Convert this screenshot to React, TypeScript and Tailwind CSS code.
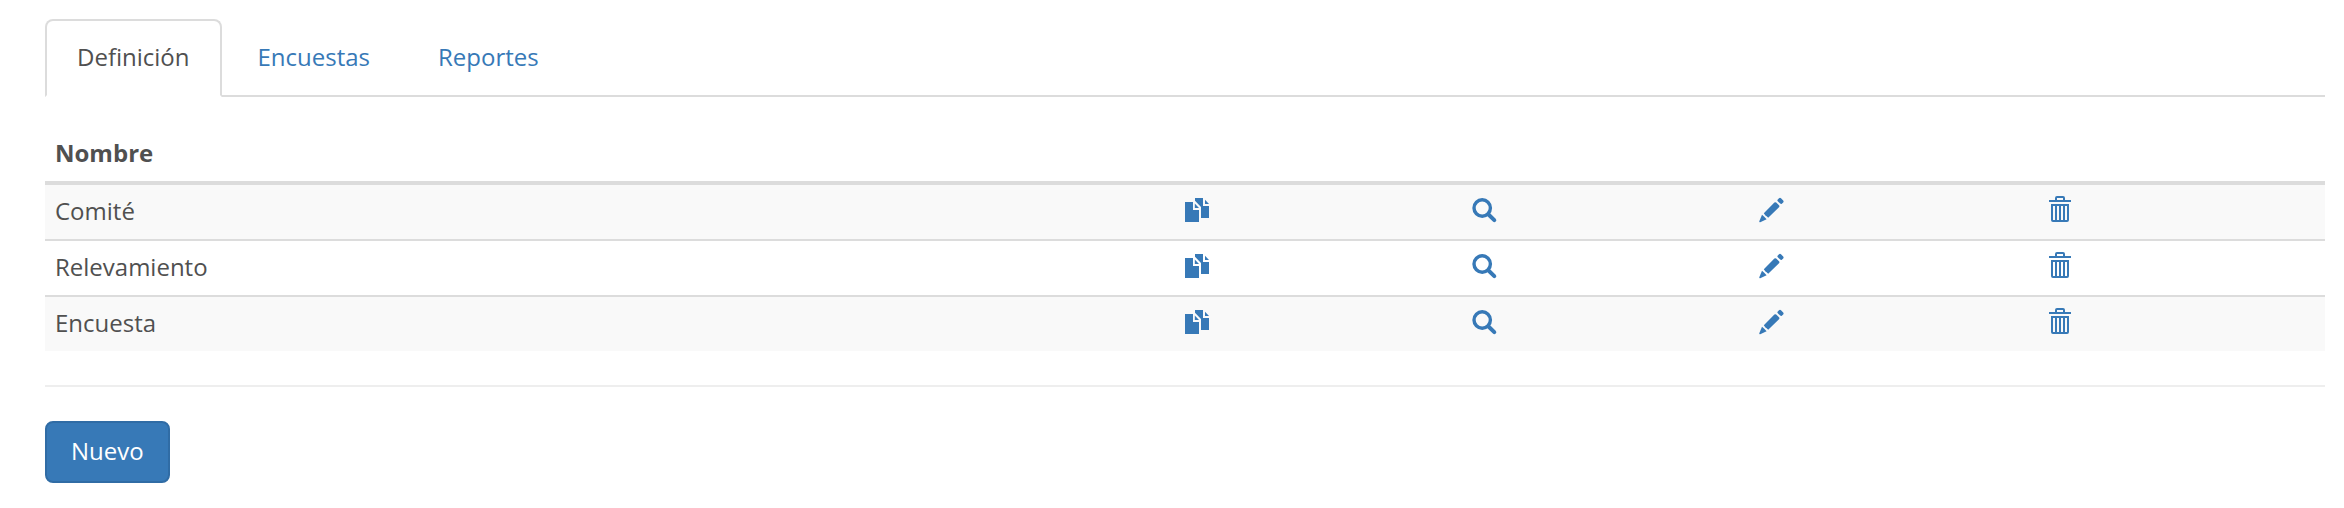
import { useState, type ReactNode } from "react";

const tabs = ["Definición", "Encuestas", "Reportes"];
const rows = ["Comité", "Relevamiento", "Encuesta"];

function Icon({ children }: { children: ReactNode }) {
  return (
    <svg viewBox="0 0 28 28" className="block h-7 w-7 overflow-visible" fill="currentColor" aria-hidden="true">
      {children}
    </svg>
  );
}

const actions = [
  {
    label: "Duplicar",
    icon: (
      <Icon>
        <path d="M1 7H9V15H15V27H1Z" />
        <path d="M10.8 8.6L15 13H10.8Z" />
        <path d="M11 3H19V11H25V23H17V12L11 5.8Z" />
        <path d="M21 4.8L25 9H21Z" />
      </Icon>
    ),
  },
  {
    label: "Ver",
    icon: (
      <Icon>
        <circle cx="10.2" cy="13" r="8.2" fill="none" stroke="currentColor" strokeWidth="3.4" />
        <path d="M16.5 19.5L22.3 25.1" fill="none" stroke="currentColor" strokeWidth="4" strokeLinecap="round" />
      </Icon>
    ),
  },
  {
    label: "Editar",
    icon: (
      <Icon>
        <path d="M17.6 4.7L19 3.3Q20 2.4 21 3.3L23.2 5.5Q24 6.4 23.2 7.4L21.8 8.8Q21 9.4 20.2 8.6L17.8 6.2Q17 5.4 17.6 4.7Z" />
        <path d="M14.4 7.6Q15.3 6.8 16.2 7.6L19 10.3Q19.9 11.3 19 12.2L8.2 22.8L6.6 21.2L5.4 20.4L3.8 18.2Z" />
        <path d="M2 19.8L4 21.4L6.6 24.3L.2 27.2Q-1 27.4-.7 26.2Z" />
      </Icon>
    ),
  },
  {
    label: "Eliminar",
    icon: (
      <Icon>
        <path
          fillRule="evenodd"
          d="M2 5H8V3Q8 1 10 1H16Q18 1 18 3V5H24V7H2ZM10 3V5H16V3ZM4 9H22V25Q22 27 20 27H6Q4 27 4 25ZM6 11V25H8V11ZM10 11V25H12V11ZM14 11V25H16V11ZM18 11V25H20V11Z"
        />
      </Icon>
    ),
  },
];

export default function App() {
  const [active, setActive] = useState(tabs[0]);
  return (
    <main className="min-h-screen bg-white pt-[19px] pr-[19px] pb-6 pl-[45px] font-['Open_Sans',sans-serif] text-2xl leading-8 text-[#505050]">
      <nav>
        <ul className="flex gap-1 border-b-2 border-[#dcdcdc]">
          {tabs.map((tab) => (
            <li key={tab} className="-mb-[2px]">
              <a
                href="#"
                onClick={() => setActive(tab)}
                className={
                  tab === active
                    ? "block rounded-t-lg border-2 border-[#dcdcdc] border-b-white px-[30px] pt-5 pb-[22px]"
                    : "block rounded-t-lg border-2 border-transparent px-[30px] pt-5 pb-[22px] text-[#3779b7]"
                }
              >
                {tab}
              </a>
            </li>
          ))}
        </ul>
      </nav>

      <table className="mt-[30px] w-full table-fixed border-collapse text-left">
        <thead>
          <tr className="border-b-4 border-[#dcdcdc]">
            <th className="px-[10px] pt-[10px] pb-3 font-bold">Nombre</th>
            {actions.map((a) => (
              <th key={a.label} aria-label={a.label} className="w-[12.62%]" />
            ))}
          </tr>
        </thead>
        <tbody>
          {rows.map((row) => (
            <tr key={row} className="border-b-2 border-[#dcdcdc] last:border-b-0 odd:bg-[#f9f9f9]">
              <td className="px-[10px] pt-[10px] pb-3">{row}</td>
              {actions.map((a) => (
                <td key={a.label} className="px-[10px] pt-[10px] pb-3 align-top text-[#3779b7]">
                  <a href="#" aria-label={`${a.label} ${row}`} className="inline-block align-top">
                    {a.icon}
                  </a>
                </td>
              ))}
            </tr>
          ))}
        </tbody>
      </table>

      <hr className="my-[34px] border-t-2 border-[#eeeeee]" />

      <button
        type="button"
        className="rounded-lg border-2 border-[#306ca5] bg-[#3779b7] px-6 pt-3 pb-[14px] text-white"
      >
        Nuevo
      </button>
    </main>
  );
}
